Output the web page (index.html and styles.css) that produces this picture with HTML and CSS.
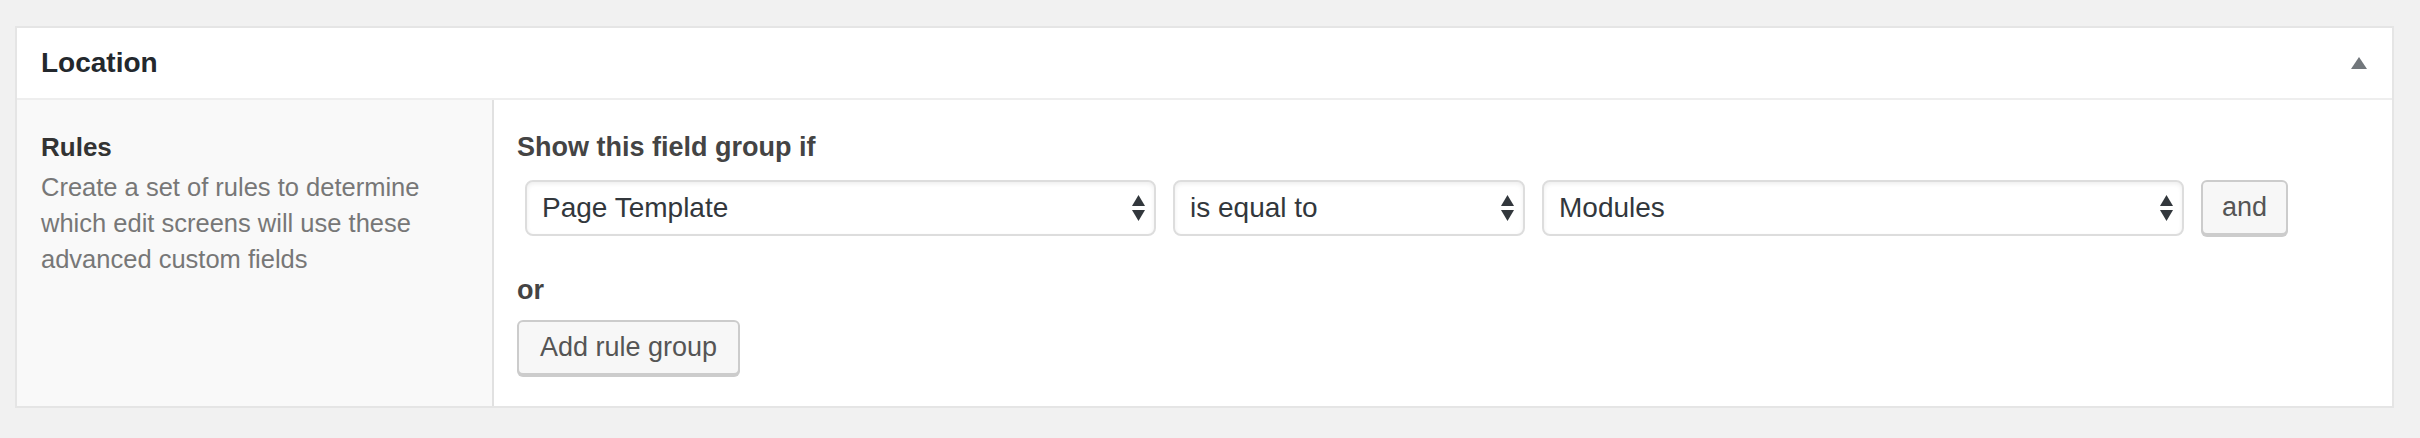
FILE: index.html
```html
<!DOCTYPE html>
<html lang="en">
<head>
    <meta charset="UTF-8">
    <title>Location</title>
    <link rel="stylesheet" href="styles.css">
</head>
<body>
    <div class="postbox">
        <div class="postbox-header">
            <h2>Location</h2>
            <span class="toggle-indicator">
                <svg width="16" height="12" viewBox="0 0 16 12"><polygon points="8,0 16,12 0,12" fill="#72777c"/></svg>
            </span>
        </div>

        <div class="postbox-body">
            <div class="field-label">
                <label>Rules</label>
                <p class="description">Create a set of rules to determine which edit screens will use these advanced custom fields</p>
            </div>

            <div class="field-input">
                <h4>Show this field group if</h4>

                <div class="rule">
                    <div class="select param">
                        <span>Page Template</span>
                        <svg class="arrows" width="13" height="26" viewBox="0 0 13 26"><polygon points="6.5,0 13,11 0,11" /><polygon points="0,15 13,15 6.5,26" /></svg>
                    </div>
                    <div class="select operator">
                        <span>is equal to</span>
                        <svg class="arrows" width="13" height="26" viewBox="0 0 13 26"><polygon points="6.5,0 13,11 0,11" /><polygon points="0,15 13,15 6.5,26" /></svg>
                    </div>
                    <div class="select value">
                        <span>Modules</span>
                        <svg class="arrows" width="13" height="26" viewBox="0 0 13 26"><polygon points="6.5,0 13,11 0,11" /><polygon points="0,15 13,15 6.5,26" /></svg>
                    </div>
                    <button type="button" class="button">and</button>
                </div>

                <h4 class="or">or</h4>
                <button type="button" class="button add-group">Add rule group</button>
            </div>
        </div>
    </div>
</body>
</html>
```

FILE: styles.css
```css
body { margin: 26px 26px 0 15px; background: #f1f1f1; font-family: "Liberation Sans", Arial, sans-serif; color: #444; }

.postbox { background: #fff; border: 2px solid #e5e5e5; box-shadow: 0 2px 2px rgba(0,0,0,.04); }
.postbox-header { display: flex; align-items: center; justify-content: space-between; padding: 15px 25px 16px 24px; border-bottom: 2px solid #eee; }
.postbox-header h2 { margin: 0; font-size: 28px; line-height: 1.4; font-weight: bold; color: #23282d; }
.toggle-indicator { display: flex; }

.postbox-body { display: grid; grid-template-columns: 477px 1fr; }
.field-label { background: #f9f9f9; border-right: 2px solid #e1e1e1; padding: 29px 24px 30px; }
.field-label label { display: block; font-size: 26px; line-height: 1.4; font-weight: bold; color: #333; margin-bottom: 3px; }
.description { margin: 0; font-size: 25.5px; line-height: 36px; color: #777; }

.field-input { padding: 29px 23px 31px; }
.field-input h4 { margin: 0; font-size: 27px; line-height: 1.4; font-weight: bold; color: #444; }
.field-input h4.or { margin-top: 36px; }

.rule { display: flex; align-items: flex-start; gap: 17px; margin: 13px 0 0 8px; }
.select { display: flex; align-items: center; justify-content: space-between; box-sizing: border-box; height: 56px; padding: 0 9px 0 15px; border: 2px solid #ddd; border-radius: 8px; box-shadow: inset 0 2px 4px rgba(0,0,0,.07); font-size: 28px; color: #32373c; }
.select.param { width: 631px; }
.select.operator { width: 352px; }
.select.value { width: 642px; }
.arrows { fill: #32373c; }

.button { box-sizing: border-box; height: 55px; padding: 0 19px; border: 2px solid #ccc; border-radius: 6px; background: #f7f7f7; box-shadow: 0 2px 0 #ccc; font-family: "Liberation Sans", Arial, sans-serif; font-size: 27px; color: #555; cursor: pointer; }
.button.add-group { display: block; margin-top: 10px; padding: 0 21px; }
```
